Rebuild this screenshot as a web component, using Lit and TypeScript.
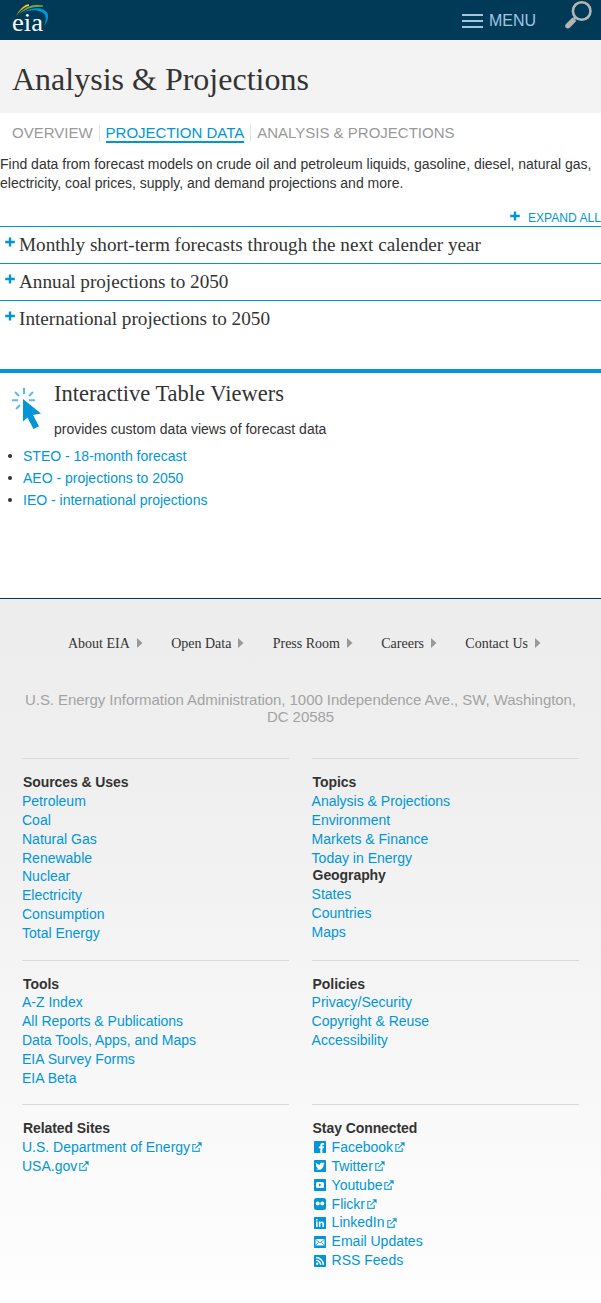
import { LitElement, html, svg, css } from "lit";
import { customElement } from "lit/decorators.js";

interface FooterLink {
  label: string;
  external?: boolean;
  icon?: string;
}
interface FooterGroup {
  title: string;
  links: FooterLink[];
}

const plain = (...labels: string[]): FooterLink[] => labels.map((label) => ({ label }));

const ROWS: FooterGroup[][][] = [
  [
    [{ title: "Sources & Uses", links: plain("Petroleum", "Coal", "Natural Gas", "Renewable", "Nuclear", "Electricity", "Consumption", "Total Energy") }],
    [
      { title: "Topics", links: plain("Analysis & Projections", "Environment", "Markets & Finance", "Today in Energy") },
      { title: "Geography", links: plain("States", "Countries", "Maps") },
    ],
  ],
  [
    [{ title: "Tools", links: plain("A-Z Index", "All Reports & Publications", "Data Tools, Apps, and Maps", "EIA Survey Forms", "EIA Beta") }],
    [{ title: "Policies", links: plain("Privacy/Security", "Copyright & Reuse", "Accessibility") }],
  ],
  [
    [{ title: "Related Sites", links: [{ label: "U.S. Department of Energy", external: true }, { label: "USA.gov", external: true }] }],
    [
      {
        title: "Stay Connected",
        links: [
          { label: "Facebook", external: true, icon: "facebook" },
          { label: "Twitter", external: true, icon: "twitter" },
          { label: "Youtube", external: true, icon: "youtube" },
          { label: "Flickr", external: true, icon: "flickr" },
          { label: "LinkedIn", external: true, icon: "linkedin" },
          { label: "Email Updates", icon: "email" },
          { label: "RSS Feeds", icon: "rss" },
        ],
      },
    ],
  ],
];

const GLYPHS: Record<string, unknown> = {
  facebook: svg`<path d="M6.300 12V7.300H4.800V5.400h1.500V4.200c0-1.500.9-2.300 2.300-2.300h1.500v1.800H9.200c-.7 0-.8.3-.8.8v.9H10l-.2 1.900H8.400V12z" fill="#fff"/>`,
  twitter: svg`<path d="M2 2.800c1 1.200 2.300 1.900 3.900 2 -.3-1.500.7-2.400 1.800-2.400.6 0 1.100.2 1.400.6l1.200-.5-.6 1.100.9-.2-1 1.100c.1 3-2 5.300-4.800 5.300-1.100 0-2.100-.3-3-.8 1 .1 1.800-.2 2.500-.7-.8 0-1.400-.5-1.700-1.200h.8c-.9-.2-1.500-.9-1.500-1.800l.8.2c-.8-.6-1-1.700-.7-2.700z" fill="#fff"/>`,
  youtube: svg`<rect x="2" y="3" width="8" height="6" rx="1.500" fill="#fff"/><path d="M5 4.500v3L7.500 6z" fill="#0096d7"/>`,
  flickr: svg`<circle cx="3.700" cy="5.600" r="2" fill="#fff"/><circle cx="8.300" cy="5.600" r="2" fill="#fff"/>`,
  linkedin: svg`<path d="M2 4.500h1.600V10H2zM2 2h1.600v1.500H2zM4.800 4.500h1.500v.8c.4-.6 1-.9 1.700-.9 1.400 0 2 .9 2 2.400V10H8.400V7.100c0-.8-.3-1.200-.9-1.200s-1.100.4-1.100 1.300V10H4.800z" fill="#fff"/>`,
  email: svg`<rect x="1.500" y="3" width="9" height="6.500" fill="#fff"/><path d="M1.500 3.200 6 7l4.500-3.800M1.500 9.300l3-3M10.500 9.300l-3-3" stroke="#0096d7" stroke-width=".8" fill="none"/>`,
  rss: svg`<circle cx="3.200" cy="8.800" r="1.200" fill="#fff"/><path d="M2 5.300A4.700 4.700 0 0 1 6.700 10M2 2.600A7.400 7.400 0 0 1 9.400 10" fill="none" stroke="#fff" stroke-width="1.500"/>`,
};

const plus = html`<svg class="plus" width="10" height="10" viewBox="0 0 10 10"><path d="M5 .5v9M.2 5h9.600" stroke="#0096d7" stroke-width="2.400"/></svg>`;
const external = html`<svg class="ext" width="10" height="10" viewBox="0 0 10 10"><path d="M4 2.500H.8V9.300H7.200V6M3.300 6.300 8.500 1.100" fill="none" stroke="#27a5dd" stroke-width="1.200"/><path d="M5.300.3h4.300v4.300z" fill="#0f9bd9"/></svg>`;

@customElement("app-root")
export class AppRoot extends LitElement {
  static styles = css`
    :host { display: block; width: 601px; height: 1303px; overflow: hidden; background: #fff; color: #333; font: 14px/19px "Liberation Sans", Arial, sans-serif; }
    * { box-sizing: border-box; margin: 0; padding: 0; }
    svg { display: block; flex: none; }
    a { color: #0096d7; text-decoration: none; }
    .top { height: 40px; background: #003a57; display: flex; align-items: flex-start; }
    .logo { margin-left: 11px; }
    .menu { margin-left: auto; display: flex; align-items: center; gap: 6px; height: 40px; color: #a2c4e0; font-size: 16px; padding-top: 1px; }
    .bars { display: grid; gap: 4px; width: 21px; }
    .bars i { height: 2px; background: #a2c4e0; }
    .search { margin: 0 7px 0 26px; }
    .band { height: 73px; background: #f3f3f3; padding: 20px 12px 0; }
    h1, h2, .acc, .quick { font-family: "Liberation Serif", "Times New Roman", serif; font-weight: 400; }
    h1 { font-size: 32px; line-height: 38px; }
    .tabs { display: flex; height: 42px; padding: 12px 12px 0; font-size: 15px; line-height: 16px; }
    .tabs span { color: #999; height: 16px; }
    .tabs .on { color: #0096d7; height: 18px; border-bottom: 2px solid #0096d7; margin: 0 6px 0 5.500px; }
    .tabs b { width: 1px; height: 17px; background: #e5e5e5; }
    .tabs b:first-of-type { margin-left: 6.500px; }
    .tabs b:last-of-type + span { margin-left: 6px; }
    .intro { height: 55px; white-space: nowrap; }
    .expand { height: 16px; display: flex; justify-content: flex-end; gap: 8px; font-size: 12.100px; line-height: 16px; color: #0096d7; }
    .expand .plus { margin-top: 1px; }
    .acc { height: 37px; border-top: 1px solid #0096d7; display: flex; gap: 4px; padding-left: 5px; font-size: 19.200px; line-height: 36px; white-space: nowrap; }
    .acc .plus { margin-top: 10px; }
    .viewers { margin-top: 32px; border-top: 4px solid #0096d7; height: 229px; }
    .vhead { display: flex; height: 72px; }
    .cursor { margin: 14px 11px 0 11px; }
    h2 { font-size: 22.500px; line-height: 26px; padding-top: 8px; margin-bottom: 13px; }
    .viewers ul { list-style: none; }
    .viewers li { display: flex; align-items: center; height: 22px; padding-left: 8px; gap: 11px; }
    .viewers li::before { content: ""; width: 4px; height: 4px; border-radius: 50%; background: #333; }
    footer { border-top: 1px solid #003a57; height: 705px; background: linear-gradient(#ededed, #efefef 25%, #fefefe); }
    .quick { display: flex; padding: 36px 0 0 68px; height: 92px; font-size: 14px; line-height: 17px; }
    .quick div { display: flex; align-items: flex-start; gap: 7px; }
    .quick svg { margin-top: 3px; }
    .quick div + div { margin-left: 28.300px; }
    .addr { height: 67px; text-align: center; color: #a3a3a3; font-size: 15px; letter-spacing: -.055px; line-height: 17px; padding: 0 20px; }
    .row { display: grid; grid-template-columns: 267px 267px; column-gap: 22.600px; padding-left: 22px; }
    .cell { border-top: 1px solid #dadada; padding-top: 14px; }
    .r0 { height: 202px; } .r1 { height: 144px; } .r2 { height: 199px; }
    h3 { font-size: 14px; line-height: 18px; height: 19.050px; letter-spacing: -.08px; padding-left: 1px; }
    .r1 h3 { height: 18.450px; }
    .link + h3 { margin-top: -1.300px; }
    .link { display: flex; align-items: center; height: 18.850px; line-height: 18.850px; white-space: nowrap; }
    .soc { margin: 0 6px 0 2px; }
    .ext { margin-left: 2px; }
  `;

  render() {
    return html`
      <header class="top">
        <svg class="logo" width="40" height="40" viewBox="0 0 40 40">
          <path d="M5 16C9 9 14 4 18 4.300V6C13 6.800 9 11 5 16z" fill="#fdc01b"/>
          <path d="M8 14.500C14 6 24 3 32 5.500V6.800C22 6 14 9 8 14.500z" fill="#6fa442"/>
          <path d="M12 12.200C22 6.500 34 7 36.800 14c1 5-1.400 9-3.800 12 1.500-4 2.500-7 1-11C31 9.500 20 9 12 12.200z" fill="#0096d7"/>
          <text x="1" y="30.500" font-family="Liberation Serif" font-size="26" fill="#fff" textLength="31" lengthAdjust="spacingAndGlyphs">eia</text>
        </svg>
        <div class="menu"><div class="bars"><i></i><i></i><i></i></div><span>MENU</span></div>
        <svg class="search" width="32" height="32" viewBox="0 0 32 32">
          <circle cx="20" cy="11" r="8.800" fill="none" stroke="#b5b5b5" stroke-width="2.600" transform="translate(-.3)"/>
          <path d="m14 17-2 2" stroke="#b5b5b5" stroke-width="3"/><path d="M10.500 17.500 14.300 21 8 27.600C5 30 1.500 27 4 24z" fill="#b5b5b5"/>
        </svg>
      </header>
      <div class="band"><h1>Analysis &amp; Projections</h1></div>
      <nav class="tabs"><span>OVERVIEW</span><b></b><span class="on">PROJECTION DATA</span><b></b><span>ANALYSIS &amp; PROJECTIONS</span></nav>
      <p class="intro">Find data from forecast models on crude oil and petroleum liquids, gasoline, diesel, natural gas,<br>electricity, coal prices, supply, and demand projections and more.</p>
      <div class="expand">${plus}<span>EXPAND ALL</span></div>
      ${["Monthly short-term forecasts through the next calender year", "Annual projections to 2050", "International projections to 2050"].map((t) => html`<div class="acc">${plus}<span>${t}</span></div>`)}
      <section class="viewers">
        <div class="vhead">
          <svg class="cursor" width="32" height="44" viewBox="0 0 32 44">
            <path d="M13 1v6M4 5l4 4M22 5l-4 4M1 13.200h6M18 13.200h6M5 22l4-4" stroke="#5bbbe6" stroke-width="2"/>
            <path d="M12 12v22.500l4.500-4L22.500 42l5.500-2.800-6-11.200 8-1.500z" fill="#0096d7"/>
          </svg>
          <div><h2>Interactive Table Viewers</h2><p>provides custom data views of forecast data</p></div>
        </div>
        <ul>${["STEO - 18-month forecast", "AEO - projections to 2050", "IEO - international projections"].map((t) => html`<li><a>${t}</a></li>`)}</ul>
      </section>
      <footer>
        <nav class="quick">${["About EIA", "Open Data", "Press Room", "Careers", "Contact Us"].map((t) => html`<div><span>${t}</span><svg width="6" height="10" viewBox="0 0 6 10"><path d="M0 0 5.500 5 0 10z" fill="#999"/></svg></div>`)}</nav>
        <p class="addr">U.S. Energy Information Administration, 1000 Independence Ave., SW, Washington, DC 20585</p>
        ${ROWS.map((cells, i) => html`<div class="row r${i}">${cells.map((groups) => html`<div class="cell">${groups.map((g) => html`
          <h3>${g.title}</h3>
          ${g.links.map((l) => html`<div class="link">${l.icon ? html`<svg class="soc" width="12" height="12" viewBox="0 0 12 12"><rect width="12" height="12" rx=${l.icon === "flickr" ? 2.5 : 0.8} fill="#0096d7"/>${GLYPHS[l.icon]}</svg>` : ""}<a>${l.label}</a>${l.external ? external : ""}</div>`)}`)}</div>`)}</div>`)}
      </footer>`;
  }
}
